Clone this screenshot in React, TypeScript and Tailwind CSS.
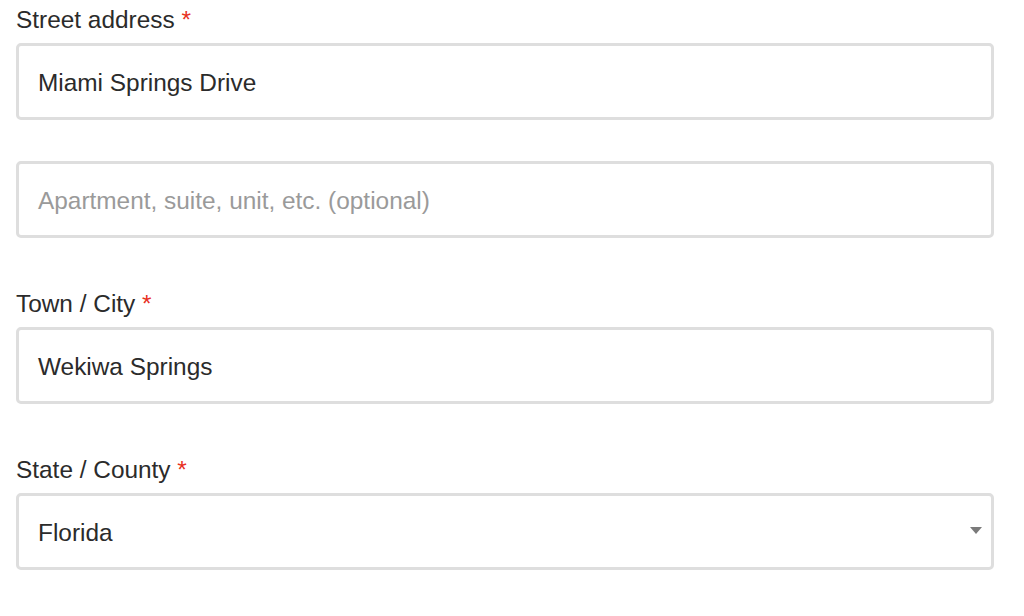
type Field = {
  label?: string;
  value?: string;
  placeholder?: string;
  select?: boolean;
};

const fields: Field[] = [
  { label: "Street address", value: "Miami Springs Drive" },
  { placeholder: "Apartment, suite, unit, etc. (optional)" },
  { label: "Town / City", value: "Wekiwa Springs" },
  { label: "State / County", value: "Florida", select: true },
];

const gaps = ["", "mt-[41px]", "mt-[54px]", "mt-[54px]"];

function Input({ field }: { field: Field }) {
  return (
    <div className="relative flex h-[77px] items-center rounded-[5px] border-[3px] border-[#dedede] bg-white pl-[19px] pt-[3px] text-[24.4px] leading-none">
      {field.value ? (
        <span className="text-[#2b2b2b]">{field.value}</span>
      ) : (
        <span className="text-[#9a9a9a]">{field.placeholder}</span>
      )}
      {field.select && (
        <span className="absolute right-[9px] top-[31px] h-0 w-0 border-x-[6px] border-t-[7px] border-x-transparent border-t-[#7a7a7a]" />
      )}
    </div>
  );
}

export default function App() {
  return (
    <div
      className="min-h-[616px] bg-white pl-[16px] pt-[8px]"
      style={{ fontFamily: '"Liberation Sans", Arial, sans-serif' }}
    >
      <div className="w-[978px]">
        {fields.map((f, i) => (
          <div key={i} className={gaps[i]}>
            {f.label && (
              <label className="mb-[11px] block text-[24.4px] leading-[24px] text-[#2b2b2b]">
                {f.label} <span className="text-[#e8311f]">*</span>
              </label>
            )}
            <Input field={f} />
          </div>
        ))}
      </div>
    </div>
  );
}
